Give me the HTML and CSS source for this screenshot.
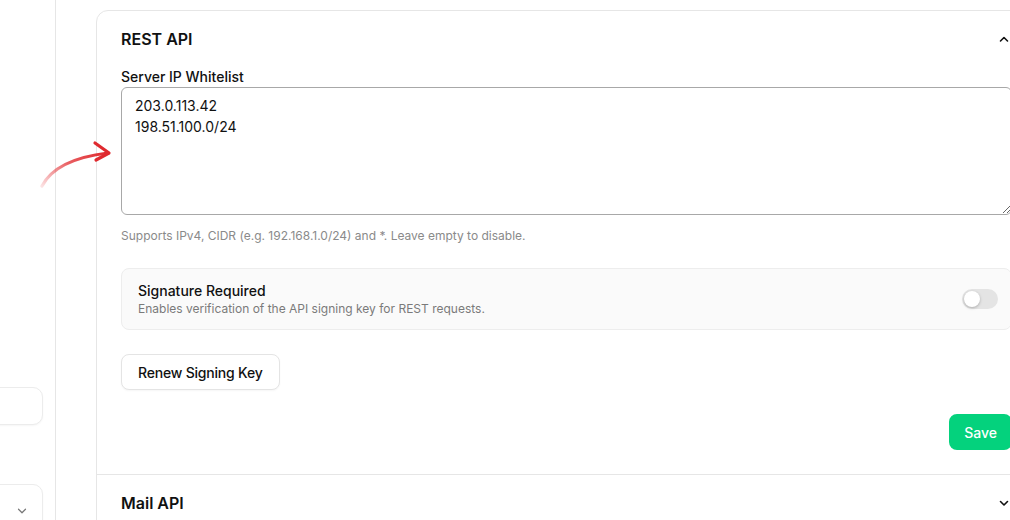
FILE: index.html
```html
<!DOCTYPE html>
<html lang="en">
<head>
<meta charset="utf-8">
<title>API Settings</title>
<link rel="stylesheet" href="styles.css">
</head>
<body>
<div class="page">
  <aside class="sidebar">
    <div class="side-box side-box-a"></div>
    <div class="side-box side-box-b">
      <svg class="side-chev" viewBox="0 0 16 16" width="14" height="14"><path d="M4 6l4 4 4-4" fill="none" stroke="#777" stroke-width="1.4" stroke-linecap="round" stroke-linejoin="round"/></svg>
    </div>
  </aside>
  <main class="main">
    <section class="card">
      <div class="panel">
        <div class="panel-head">
          <h2 class="panel-title">REST API</h2>
          <svg class="chev" viewBox="0 0 16 16" width="16" height="16"><path d="M4.5 10l3.5-3.5 3.5 3.5" fill="none" stroke="#111" stroke-width="1.6" stroke-linecap="round" stroke-linejoin="round"/></svg>
        </div>
        <div class="panel-body">
          <label class="field-label" for="wl">Server IP Whitelist</label>
          <textarea id="wl" class="textarea">203.0.113.42
198.51.100.0/24</textarea>
          <p class="hint">Supports IPv4, CIDR (e.g. 192.168.1.0/24) and *. Leave empty to disable.</p>
          <div class="setting">
            <div class="setting-text">
              <div class="setting-title">Signature Required</div>
              <div class="setting-desc">Enables verification of the API signing key for REST requests.</div>
            </div>
            <span class="toggle"><span class="knob"></span></span>
          </div>
          <div class="row-left">
            <button class="btn">Renew Signing Key</button>
          </div>
          <div class="row-right">
            <button class="btn-primary">Save</button>
          </div>
        </div>
      </div>
      <div class="panel panel-collapsed">
        <div class="panel-head">
          <h2 class="panel-title">Mail API</h2>
          <svg class="chev" viewBox="0 0 16 16" width="16" height="16"><path d="M4.5 6.5l3.5 3.5 3.5-3.5" fill="none" stroke="#111" stroke-width="1.6" stroke-linecap="round" stroke-linejoin="round"/></svg>
        </div>
      </div>
    </section>
  </main>
  <svg class="annot-arrow" viewBox="0 0 80 60" width="80" height="60">
    <defs>
      <linearGradient id="ag" x1="0" y1="1" x2="1" y2="0">
        <stop offset="0" stop-color="#e8353a" stop-opacity="0.15"/>
        <stop offset="0.55" stop-color="#e3373b" stop-opacity="0.8"/>
        <stop offset="1" stop-color="#df2a2f" stop-opacity="1"/>
      </linearGradient>
    </defs>
    <path d="M2 55 C 12 36, 34 26, 68 22" fill="none" stroke="url(#ag)" stroke-width="3.2" stroke-linecap="round"/>
    <path d="M55 12 L 69 22 L 56 29" fill="none" stroke="#df2a2f" stroke-width="3.2" stroke-linecap="round" stroke-linejoin="round"/>
  </svg>
</div>
</body>
</html>
```

FILE: styles.css
```css
* { box-sizing: border-box; }
html, body { margin: 0; padding: 0; }
body {
  background: #fff;
  font-family: Inter, "Noto Sans", "Liberation Sans", sans-serif;
  color: #111;
  overflow: hidden;
  width: 1010px;
  height: 520px;
}
.page {
  position: relative;
  display: flex;
  height: 520px;
  width: 1010px;
  overflow: hidden;
}
.sidebar {
  width: 56px;
  flex: none;
  border-right: 1px solid #e6e6e6;
  position: relative;
  overflow: hidden;
}
.side-box {
  position: absolute;
  right: 12px;
  width: 120px;
  background: #fff;
  border: 1px solid #ececec;
  border-radius: 10px;
  box-shadow: 0 1px 2px rgba(0,0,0,0.04);
}
.side-box-a { top: 387px; height: 38px; }
.side-box-b { top: 484px; height: 60px; }
.side-chev { position: absolute; right: 13px; top: 19px; }
.main {
  flex: 1;
  min-width: 0;
  overflow: hidden;
  padding: 10px 0 0 40px;
}
.card {
  width: 941px;
  border: 1px solid #e6e6e6;
  border-radius: 12px;
  background: #fff;
}
.panel { padding: 16px 24px 24px; }
.panel + .panel { border-top: 1px solid #e6e6e6; }
.panel-head {
  display: flex;
  align-items: center;
  justify-content: space-between;
  height: 24px;
}
.panel-title {
  margin: 0;
  font-size: 16px;
  line-height: 24px;
  font-weight: 600;
  color: #111;
}
.panel-body {
  display: flex;
  flex-direction: column;
  padding-top: 16px;
}
.field-label {
  font-size: 14px;
  line-height: 20px;
  font-weight: 500;
  color: #111;
}
.textarea {
  display: block;
  width: 100%;
  height: 128px;
  margin: 0;
  padding: 8px 13px;
  border: 1px solid #a8a8a8;
  border-radius: 6px;
  font-family: inherit;
  font-size: 14px;
  line-height: 20.5px;
  color: #111;
  background: #fff;
  resize: vertical;
}
.hint {
  margin: 13px 0 0;
  font-size: 12px;
  line-height: 16px;
  color: #8a8a8a;
}
.setting {
  margin-top: 24px;
  display: flex;
  align-items: center;
  justify-content: space-between;
  padding: 12px 13px 12px 16px;
  background: #fafafa;
  border: 1px solid #ededed;
  border-radius: 8px;
}
.setting-title {
  font-size: 14px;
  line-height: 20px;
  font-weight: 500;
  color: #111;
}
.setting-desc {
  font-size: 12px;
  line-height: 16px;
  color: #7a7a7a;
}
.toggle {
  position: relative;
  width: 36px;
  height: 20px;
  border-radius: 10px;
  background: #e4e4e4;
  flex: none;
}
.knob {
  position: absolute;
  left: 2px;
  top: 2px;
  width: 16px;
  height: 16px;
  border-radius: 50%;
  background: #fff;
  box-shadow: 0 1px 3px rgba(0,0,0,0.25);
}
.row-left { margin-top: 24px; display: flex; }
.row-right { margin-top: 24px; display: flex; justify-content: flex-end; }
.btn {
  height: 36px;
  padding: 0 16px;
  border: 1px solid #e4e4e4;
  border-radius: 8px;
  background: #fff;
  font-family: inherit;
  font-size: 14px;
  font-weight: 500;
  letter-spacing: -0.2px;
  color: #111;
  box-shadow: 0 1px 2px rgba(0,0,0,0.04);
}
.btn-primary {
  height: 36px;
  padding: 0 15px;
  border: none;
  border-radius: 8px;
  background: #04d27d;
  font-family: inherit;
  font-size: 14px;
  font-weight: 500;
  color: #fff;
}
.panel-collapsed { padding-bottom: 16px; }
.annot-arrow {
  position: absolute;
  left: 40px;
  top: 131px;
}
```
